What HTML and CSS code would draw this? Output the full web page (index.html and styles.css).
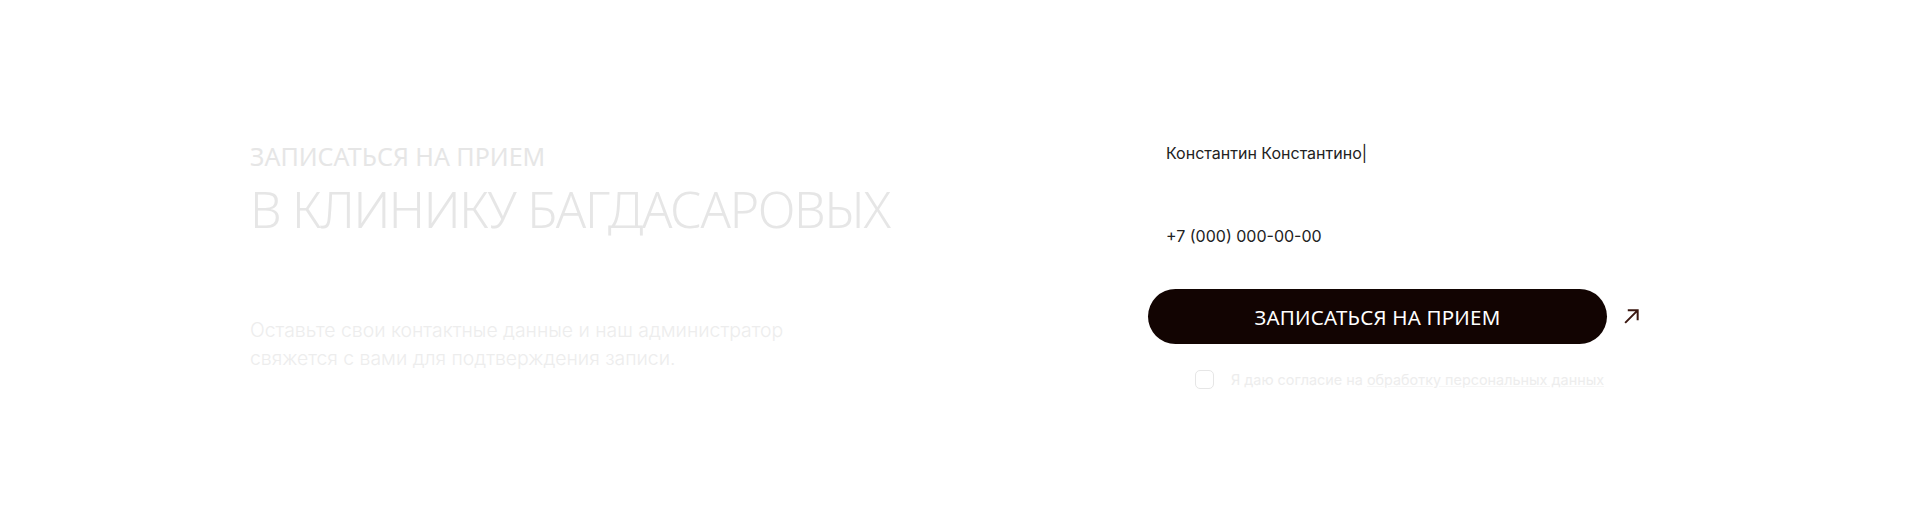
FILE: index.html
```html
<!DOCTYPE html>
<html lang="ru">
<head>
<meta charset="utf-8">
<title>Записаться на прием</title>
<link rel="stylesheet" href="styles.css">
</head>
<body>
<section class="booking">
  <div class="intro">
    <h3 class="subtitle">ЗАПИСАТЬСЯ НА ПРИЕМ</h3>
    <h2 class="title">В КЛИНИКУ БАГДАСАРОВЫХ</h2>
    <p class="lead">Оставьте свои контактные данные и наш администратор<br>свяжется с вами для подтверждения записи.</p>
  </div>
  <form class="form">
    <div class="field"><span class="value">Константин Константино|</span></div>
    <div class="field"><span class="value">+7 (000) 000-00-00</span></div>
    <div class="submit-row">
      <button type="button" class="btn">ЗАПИСАТЬСЯ НА ПРИЕМ</button>
      <svg class="arrow" width="17" height="17" viewBox="0 0 16 16"><path d="M2 14 L13.5 2.5 M4.5 2.2 H13.8 V11.5" fill="none" stroke="#3a1710" stroke-width="1.9"/></svg>
    </div>
    <label class="consent"><span class="box"></span><span class="consent-text">Я даю согласие на <u>обработку персональных данных</u></span></label>
  </form>
</section>
</body>
</html>
```
FILE: styles.css
```css
html, body { margin: 0; padding: 0; background: #ffffff; }
body { width: 1920px; height: 511px; overflow: hidden; }
.booking {
  display: flex;
  align-items: flex-start;
  padding: 125px 0 0 250px;
}
.intro {
  width: 898px;
  margin-top: 18px;
}
.subtitle {
  margin: 0;
  font-family: "Noto Sans", sans-serif;
  font-weight: 400;
  font-size: 25px;
  line-height: 26px;
  color: #e6e6e6;
}
.title {
  margin: 15px 0 0;
  font-family: "Noto Sans", sans-serif;
  font-weight: 300;
  font-size: 50px;
  line-height: 50px;
  letter-spacing: -1.3px;
  color: #e6e6e6;
}
.lead {
  margin: 82px 0 0;
  font-family: Inter, sans-serif;
  font-weight: 300;
  font-size: 19.4px;
  line-height: 28px;
  color: #ededed;
}
.form {
  display: flex;
  flex-direction: column;
  width: 520px;
}
.field {
  height: 56px;
  display: flex;
  align-items: center;
  padding-left: 18px;
  margin-bottom: 27px;
  font-family: Inter, sans-serif;
  font-size: 16px;
  color: #222222;
}
.field + .field { margin-bottom: 25px; }
.submit-row {
  display: flex;
  align-items: center;
  gap: 16px;
}
.btn {
  width: 459px;
  height: 55px;
  border: none;
  border-radius: 28px;
  background: #120402;
  color: #ffffff;
  font-family: "Noto Sans", sans-serif;
  font-size: 20.5px;
  font-weight: 400;
  letter-spacing: 0.2px;
  padding: 0;
}
.arrow { display: block; }
.consent {
  display: flex;
  align-items: center;
  gap: 17px;
  margin-top: 26px;
  padding-left: 47px;
  font-family: Inter, sans-serif;
  font-size: 14.4px;
  color: #ededed;
  white-space: nowrap;
}
.box {
  width: 17px;
  height: 17px;
  border: 1px solid #e6e6e6;
  border-radius: 5px;
  flex: none;
}
.consent-text u { text-decoration-color: #f7f7f7; }
```
